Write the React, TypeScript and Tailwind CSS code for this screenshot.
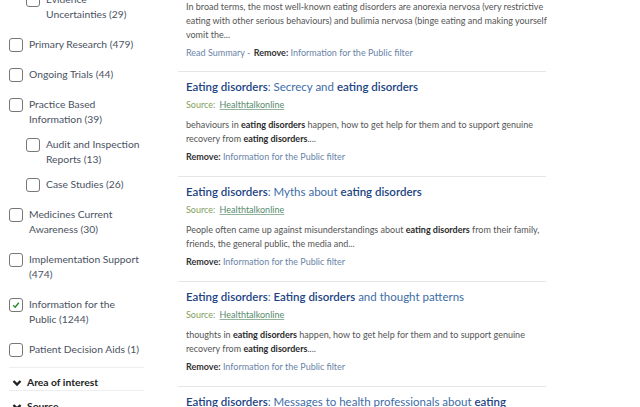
import React from "react";

type Opt = { label: string; checked?: boolean; children?: Opt[] };

const options: Opt[] = [
  { label: "Primary Research (479)" },
  { label: "Ongoing Trials (44)" },
  {
    label: "Practice Based Information (39)",
    children: [{ label: "Audit and Inspection Reports (13)" }, { label: "Case Studies (26)" }],
  },
  { label: "Medicines Current Awareness (30)" },
  { label: "Implementation Support (474)" },
  { label: "Information for the Public (1244)", checked: true },
  { label: "Patient Decision Aids (1)" },
];

function Box({ checked }: { checked?: boolean }) {
  return (
    <span className="mt-[0.5px] flex h-[14px] w-[14px] shrink-0 items-center justify-center rounded-[3px] border border-[#777] bg-white">
      {checked && (
        <svg width="8" height="8" viewBox="0 0 8 8">
          <polyline points="1.2,4.3 3.2,6.2 6.8,1.8" fill="none" stroke="#2f8a2f" strokeWidth="1.5" />
        </svg>
      )}
    </span>
  );
}

function Check({ label, checked }: { label: string; checked?: boolean }) {
  return (
    <div className="flex items-start gap-[6px]">
      <Box checked={checked} />
      <span className="leading-[15px]">{label}</span>
    </div>
  );
}

function Chevron() {
  return (
    <svg width="10" height="8" viewBox="0 0 10 8" className="shrink-0">
      <polyline points="1.5,2 5,5.5 8.5,2" fill="none" stroke="#222" strokeWidth="2.4" />
    </svg>
  );
}

const B = ({ children }: { children: React.ReactNode }) => <b className="font-bold text-[#2a2a2a]">{children}</b>;
const H = ({ children }: { children: React.ReactNode }) => <span className="font-semibold text-[#1c4482]">{children}</span>;

function Result({ title, body, last }: { title: React.ReactNode; body?: React.ReactNode; last?: boolean }) {
  return (
    <div className={`pl-[8px] pt-[6px] ${last ? "" : "border-b border-[#e6e6e6] pb-[12px]"}`}>
      <div className="text-[11.5px] leading-[18px] text-[#3d6ca6]">{title}</div>
      {!last && (
        <>
          <div className="mt-[2px] text-[9px] leading-[14px] text-[#82a05c]">
            Source:{" "}
            <span className="ml-[2px] text-[#578a6c] underline decoration-[#93b39c]">Healthtalkonline</span>
          </div>
          <div className="mt-[6px] w-[365px] text-[9px] leading-[14px] text-[#555]">{body}</div>
          <div className="mt-[4px] text-[9px] leading-[14px] text-[#6a84a8]">
            <span className="font-bold text-[#333]">Remove:</span> Information for the Public filter
          </div>
        </>
      )}
    </div>
  );
}

export default function App() {
  return (
    <div className="flex h-[407px] w-[640px] overflow-hidden bg-white" style={{ fontFamily: "Lato, 'Open Sans', sans-serif" }}>
      <aside className="ml-[9px] w-[135px] shrink-0 text-[10.3px] text-[#4a5262]">
        <div className="-mt-[8px] flex flex-col">
          <div className="pl-[17px]">
            <Check label="Evidence Uncertainties (29)" />
          </div>
          {options.map((o) => (
            <div key={o.label} className="mt-[15px]">
              <Check label={o.label} checked={o.checked} />
              {o.children && (
                <div className="flex flex-col gap-[10px] pl-[17px] pt-[10px]">
                  {o.children.map((c) => (
                    <Check key={c.label} label={c.label} />
                  ))}
                </div>
              )}
            </div>
          ))}
          <div className="mt-[10px] border-t border-[#eeeeee]" />
          <div className="flex items-center gap-[5px] border-b border-[#eeeeee] pl-[3px] pt-[7px] font-bold leading-[15px] text-[#222]">
            <Chevron />
            <span>Area of interest</span>
          </div>
          <div className="flex items-center gap-[5px] pl-[3px] pt-[8px] font-bold leading-[15px] text-[#222]">
            <Chevron />
            <span>Source</span>
          </div>
        </div>
      </aside>
      <main className="ml-[34px] w-[368px] shrink-0">
        <div className="border-b border-[#e6e6e6] pb-[11px] pl-[8px]">
          <div className="w-[365px] text-[9px] leading-[14px] text-[#555]">
            In broad terms, the most well-known eating disorders are anorexia nervosa (very restrictive eating with
            other serious behaviours) and bulimia nervosa (binge eating and making yourself vomit the...
          </div>
          <div className="mt-[4px] text-[9px] leading-[14px] text-[#6a84a8]">
            Read Summary - <span className="ml-[1px] font-bold text-[#333]">Remove:</span> Information for the Public
            filter
          </div>
        </div>
        <Result
          title={
            <>
              <H>Eating disorders</H>: Secrecy and <H>eating disorders</H>
            </>
          }
          body={
            <>
              behaviours in <B>eating disorders</B> happen, how to get help for them and to support genuine recovery
              from <B>eating disorders</B>....
            </>
          }
        />
        <Result
          title={
            <>
              <H>Eating disorders</H>: Myths about <H>eating disorders</H>
            </>
          }
          body={
            <>
              People often came up against misunderstandings about <B>eating disorders</B> from their family,
              friends, the general public, the media and...
            </>
          }
        />
        <Result
          title={
            <>
              <H>Eating disorders</H>: <H>Eating disorders</H> and thought patterns
            </>
          }
          body={
            <>
              thoughts in <B>eating disorders</B> happen, how to get help for them and to support genuine recovery
              from <B>eating disorders</B>....
            </>
          }
        />
        <Result
          last
          title={
            <>
              <H>Eating disorders</H>: Messages to health professionals about <H>eating disorders</H>
            </>
          }
        />
      </main>
    </div>
  );
}
